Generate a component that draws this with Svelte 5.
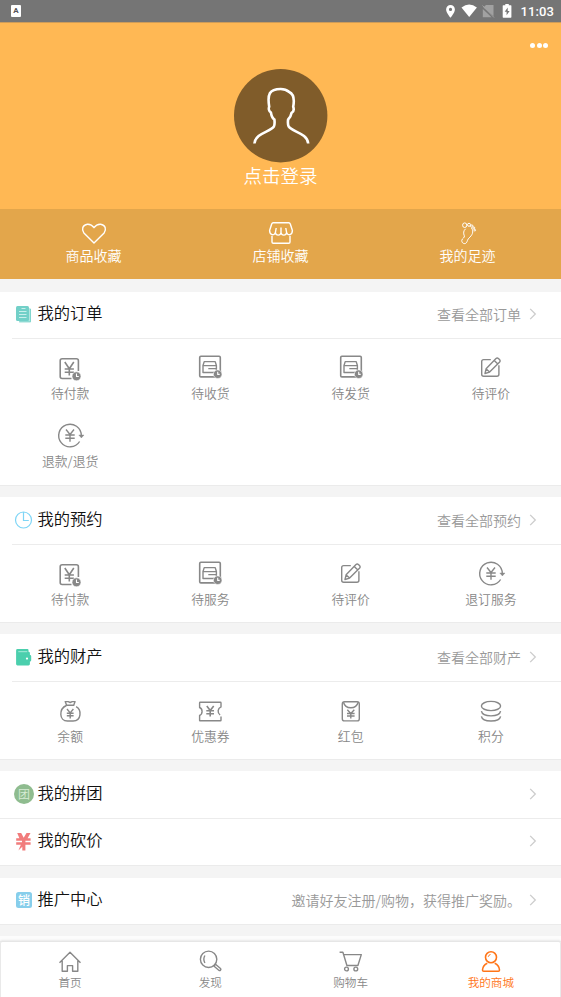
<script lang="ts">
	type Item = { icon: string; label: string };

	const shortcuts: Item[] = [
		{ icon: 'heart', label: '商品收藏' },
		{ icon: 'shop', label: '店铺收藏' },
		{ icon: 'foot', label: '我的足迹' }
	];

	const sections: { icon: string; title: string; more: string; items: Item[] }[] = [
		{
			icon: 'orders',
			title: '我的订单',
			more: '查看全部订单',
			items: [
				{ icon: 'pay', label: '待付款' },
				{ icon: 'box', label: '待收货' },
				{ icon: 'box', label: '待发货' },
				{ icon: 'edit', label: '待评价' },
				{ icon: 'refund', label: '退款/退货' }
			]
		},
		{
			icon: 'clock',
			title: '我的预约',
			more: '查看全部预约',
			items: [
				{ icon: 'pay', label: '待付款' },
				{ icon: 'box', label: '待服务' },
				{ icon: 'edit', label: '待评价' },
				{ icon: 'refund', label: '退订服务' }
			]
		},
		{
			icon: 'wallet',
			title: '我的财产',
			more: '查看全部财产',
			items: [
				{ icon: 'bag', label: '余额' },
				{ icon: 'coupon', label: '优惠券' },
				{ icon: 'packet', label: '红包' },
				{ icon: 'coins', label: '积分' }
			]
		}
	];

	const tabs: Item[] = [
		{ icon: 'home', label: '首页' },
		{ icon: 'search', label: '发现' },
		{ icon: 'cart', label: '购物车' },
		{ icon: 'user', label: '我的商城' }
	];

	let active = $state('user');
</script>

{#snippet icon(name: string)}
	<svg class="icon" viewBox="0 0 28 28">
		{#if name === 'heart'}
			<path d="M14 24 3.900 14C1.400 10.800 2.400 5.700 7.400 5.200c3-.2 5 1.200 6.600 3.500 1.600-2.300 3.600-3.700 6.600-3.500 5 .5 6 5.600 3.500 8.800z" />
		{:else if name === 'shop'}
			<path d="M6.200 3.800h15.600q1 0 1.500 1.200l2.100 6.500c0 5-5.200 5.200-5.800 2 -.6 3.500-5 3.500-5.600 0-.6 3.500-5 3.500-5.600 0-.6 3.200-5.800 3-5.800-2l2.100-6.500q.5-1.200 1.500-1.200zM8.400 13.500l.8-4.500M14 13.500V8.500M19.600 13.500l-.8-4.500M5 16.800v6.200q0 1.300 1.300 1.300h15.400q1.300 0 1.300-1.300v-6.200" />
		{:else if name === 'foot'}
			<path class="thin" d="M11.600 9.800c-2.300 2-2.300 4.400-1.300 7 .8 2-2.100 2.200-2.500 4.500-.3 3 3 4.300 4.500 2.500 1.500-1.700.5-3 3.600-5.700 3.500-3.200 3.600-7.200 1.300-9.100" />
			<ellipse class="thin" cx="10.700" cy="6.200" rx="2.100" ry="2.300" />
			<circle class="thin" cx="15" cy="5.800" r="1.500" />
			<circle class="thin" cx="17.800" cy="7.100" r="1.200" />
			<circle class="thin" cx="19.800" cy="9" r="1" />
			<circle class="thin" cx="20.800" cy="11.200" r=".8" />
		{:else if name === 'pay'}
			<path class="bold" d="M15.500 24.500H6.200q-2 0-2-2V6.800q0-2 2-2h14.200q2 0 2 2v10.200" />
			<path class="bold" d="m8.800 8 4.500 6.800L17.800 8M13.300 14.800v6.700M8.700 15h9.200M8.700 18.200h9.200" />
			<circle class="solid" cx="20.500" cy="22.300" r="4.500" />
			<path class="hole" d="M20.500 19.600v2.900h2.300" />
		{:else if name === 'box'}
			<rect class="bold" x="3.700" y="2.300" width="20.600" height="20.600" rx="1.200" />
			<path d="M7 18.500v-7l1.200-3.900h11l1.200 3.900v7zM7 11.600h13.400M12.300 14.600h8" />
			<circle class="solid" cx="21.700" cy="20.200" r="4.300" />
			<path class="hole" d="M21.700 17.700v2.700h2" />
		{:else if name === 'edit'}
			<path d="M13.800 5.600H6.700q-2 0-2 2v12.700q0 2 2 2h13.200q2 0 2-2v-9" />
			<path d="m8 19.500 1.100-4.700 9.900-10.300q1.200-1.100 2.400 0l1.300 1.300q1 1.200 0 2.200l-10.100 10.100zM17.200 6.500l3.700 3.600M9.200 14.900l3.400 3.200" />
		{:else if name === 'refund'}
			<path d="M25.300 13.500A11.300 11.300 0 1 0 23.600 19.500" />
			<path d="M22.800 13h5.200l-2.600 2.900z" fill="currentColor" stroke-width=".4" />
			<path d="m10 7.500 4 5 4-5M14 12.500v7.200M9.300 13h9.400M9.300 16.300h9.400" />
		{:else if name === 'bag'}
			<path d="M10.600 8.300 9.200 4.600h3l2 .9 2-.9h2.900l-1.400 3.700M10 8.300h8.300M10.400 8.500C2.800 11.800 2.800 24 11.500 24h5.600c8.700 0 8.600-11.500 3-14.300" />
			<path d="m11 12 3.200 3.900 3.200-3.900M14.200 16v5.600M10.800 16.200h6.800M10.800 18.800h6.800" />
		{:else if name === 'coupon'}
			<path d="M4.200 5.300h20.200q.6 0 .6.600v4c-3.400 1.500-3.900 5.900-.9 8.100M25 19.500v3.700q0 .6-.6.600H4.200q-.6 0-.6-.6v-4.700c3.300-1.500 3.300-6.500 0-8V5.900q0-.6.600-.6" />
			<path class="bold" d="m10.800 9 3.400 4.600L17.700 9M14.200 13.600v6M10.300 13.800H18M10.300 16.800H18" />
		{:else if name === 'packet'}
			<rect x="5.300" y="4.700" width="17" height="19.200" rx="2.200" />
			<path d="M6.600 5.500c1.700 7 12.700 7 14.400 0M10.300 12.800l3.500 3.700 3.500-3.700M13.800 16.500v5M10 16.500h7.600M10 19h7.600" />
		{:else if name === 'coins'}
			<ellipse cx="14" cy="9" rx="9.600" ry="4.600" />
			<path d="M4.400 14.200c1.200 6.200 18 6.200 19.200 0M4.400 19.300c1.200 6.200 18 6.200 19.200 0" />
		{:else if name === 'home'}
			<path d="M3.500 14.800 14 4.200l10.500 10.600M6.200 12.800v10.500h5.200V17.600h5.200v5.700h5.200V12.800" />
		{:else if name === 'search'}
			<circle cx="12.600" cy="11.300" r="8.200" />
			<path d="M8.900 7.500q-2.200 3.700 0 7.500M17.800 18l1.700-1.700 5 4.200q.8.900 0 1.700t-1.700 0z" />
		{:else if name === 'cart'}
			<path d="M2.600 4.200h3.300l4 13.300h11l3.400-10.900H6.700" />
			<circle cx="9.500" cy="21" r="1.900" />
			<circle cx="18.800" cy="21" r="1.900" />
		{:else if name === 'user'}
			<circle class="bold" cx="14" cy="9.300" r="5.500" />
			<path class="bold" d="M10.300 15.300C7 16.800 5.700 19 5.500 22q0 1.300 1.200 1.300h14.600q1.200 0 1.200-1.300c-.2-3-1.500-5.200-4.800-6.700" />
			<path class="thin" d="M11.200 8.800q.5-2 2.300-2.300" />
		{/if}
	</svg>
{/snippet}

{#snippet badge(name: string)}
	<svg class="badge" viewBox="0 0 20 20">
		{#if name === 'orders'}
			<path d="M5 4.200h11q.9 0 .9.900v12.300q0 .9-.9.900H5.500z" fill="#b2e6e1" />
			<rect x="2" y="2" width="13" height="15" rx="1.500" fill="#72d0c8" />
			<path d="M7.500 4.500h4M5 7.500h7.500M5 10.500h7.500M5 13.500h7.500" stroke="#c9efec" />
			<path d="M16.500 5v12.800H5" fill="none" stroke="#72d0c8" stroke-width=".8" />
		{:else if name === 'clock'}
			<circle cx="9.500" cy="10" r="8" fill="none" stroke="#7ed5f6" stroke-width="1.200" />
			<path d="M9.500 2v8.500h5.300" fill="none" stroke="#7ed5f6" stroke-width="1.200" />
		{:else if name === 'wallet'}
			<path d="M3.500 2h10q1 0 1 1.200v1.600q1.400 0 1.400 1.300v2h.1q1.200 0 1.200 1.200v4q0 1.200-1.200 1.200h-.1V17q0 1.400-1.400 1.400H3.500Q2.100 18.400 2.100 17V3.400Q2.100 2 3.500 2z" fill="#4bcfad" />
			<path d="M4.300 4.700h9" stroke="#a9eadb" />
			<circle cx="13" cy="11.600" r="1.100" fill="#fff" />
		{:else if name === 'bargain'}
			<path d="M3.200 2h4l2.500 4.700L12.500 2h4l-2.900 5.200h3v2.600h-5.200v1.400h5.200v2.600h-5.200v5.700H8.300v-3.700l-3.900 3.600 2.400-5.600H2.200v-2.600H8v-1.400H2.200V7.200h3.200z" fill="#f17c7c" />
		{/if}
	</svg>
{/snippet}

{#snippet chevron()}
	<svg class="chevron" viewBox="0 0 8 12"><path d="m1.200.9 5.100 5.100-5.100 5.100" /></svg>
{/snippet}

<div class="page">
	<div class="statusbar">
		<span class="ime">A</span>
		<svg class="signals" viewBox="0 0 72 22">
			<path fill="#fff" fill-rule="evenodd" d="M8.500 5a4.400 4.400 0 0 0-4.400 4.400c0 3.200 4.400 8.300 4.400 8.300s4.400-5.100 4.400-8.300A4.400 4.400 0 0 0 8.500 5zm0 2.800a1.600 1.600 0 1 1 0 3.200 1.600 1.600 0 0 1 0-3.200z" />
			<path fill="#fff" d="M19.500 7.400q7.700-5.600 15.400 0L27.200 17z" />
			<path fill="#a1a1a1" d="M44 5h7.500v11L41.400 7.500zM40.800 9l8.700 8.200h-8.700z" />
			<path stroke="#a1a1a1" d="m40.500 5.500 11.500 12" />
			<path fill="#fff" d="M61.300 5.200h2v-1.200h3.500v1.200h2q.6 0 .6.600v11.300q0 .6-.6.600h-7.500q-.6 0-.6-.6V5.800q0-.6.600-.6z" />
			<path fill="#757575" d="m65.700 7.500-3 4.200h1.900v3.500l3-4.300h-1.900z" />
		</svg>
		<span class="time">11:03</span>
	</div>

	<header class="hero">
		<div class="dots"><i></i><i></i><i></i></div>
		<svg class="avatar" viewBox="0 0 94 94">
			<circle cx="46.700" cy="46.700" r="46.700" />
			<path d="M20.400 74.500c1-10.500 16-11.500 19.500-17 1-2 .8-4.500.5-7-2.600-1.700-3-4.200-3.500-7-2.200-1.400-2.400-4.200-1.700-5.800C33.200 25.500 35.200 20 46.700 20c4.500 0 6.500 1.300 8.500 3 5.500 2.500 5.200 8.500 4 14.800.9 2.500.2 5-1.600 6-.5 2.800-1.700 5-3.500 6.700-.3 2.500-.5 5 .6 7 3.500 5.500 18.500 6.500 19.500 17" />
		</svg>
		<span class="login">点击登录</span>
	</header>

	<div class="shortcuts">
		{#each shortcuts as item}
			<div class="shortcut">
				{@render icon(item.icon)}
				<span>{item.label}</span>
			</div>
		{/each}
	</div>

	{#each sections as section}
		<section class="card">
			<div class="head">
				{@render badge(section.icon)}
				<h2>{section.title}</h2>
				<span class="more">{section.more}</span>
				{@render chevron()}
			</div>
			<div class="grid">
				{#each section.items as item}
					<div class="cell">
						{@render icon(item.icon)}
						<span>{item.label}</span>
					</div>
				{/each}
			</div>
		</section>
	{/each}

	<section class="card rows">
		<div class="row first">
			<span class="badge group">团</span>
			<h2>我的拼团</h2>
			{@render chevron()}
		</div>
		<div class="row">
			{@render badge('bargain')}
			<h2>我的砍价</h2>
			{@render chevron()}
		</div>
	</section>

	<section class="card promo">
		<div class="row">
			<span class="badge sales"><b>销</b></span>
			<h2>推广中心</h2>
			<span class="more">邀请好友注册/购物，获得推广奖励。</span>
			{@render chevron()}
		</div>
	</section>

	<div class="rest"></div>

	<nav class="tabbar">
		{#each tabs as tab}
			<button class="tab" class:active={active === tab.icon} onclick={() => (active = tab.icon)}>
				{@render icon(tab.icon)}
				<span>{tab.label}</span>
			</button>
		{/each}
	</nav>
</div>

<style>
	.page {
		display: flex;
		flex-direction: column;
		height: 997px;
		overflow: hidden;
		background: #f4f4f4;
		font-family: 'Noto Sans CJK SC', sans-serif;
		font-weight: 350;
		color: #111;
	}

	.statusbar {
		flex: none;
		display: flex;
		align-items: center;
		height: 22px;
		padding: 0 7px 0 11px;
		background: #757575;
		border-bottom: 1px solid #cf9c58;
		box-sizing: border-box;
		height: 23px;
		color: #fff;
	}

	.ime {
		width: 10px;
		height: 12px;
		border-radius: 1px;
		background: #fff;
		color: #555;
		font: bold 8px/12px Roboto, sans-serif;
		text-align: center;
	}

	.signals {
		width: 72px;
		height: 22px;
		margin-left: auto;
		margin-right: 7px;
	}

	.time {
		font: 500 13px/22px Roboto, sans-serif;
		letter-spacing: 0.1px;
		padding-top: 1px;
	}

	.hero {
		flex: none;
		display: flex;
		flex-direction: column;
		align-items: center;
		height: 186px;
		background: #ffb854;
	}

	.dots {
		align-self: flex-end;
		display: flex;
		gap: 1.5px;
		padding: 20px 13px 21px 0;
	}

	.dots i {
		width: 5px;
		height: 5px;
		border-radius: 50%;
		background: #fff;
	}

	.avatar {
		width: 94px;
		height: 94px;
	}

	.avatar circle {
		fill: #805c2a;
	}

	.avatar path {
		fill: none;
		stroke: #fff;
		stroke-width: 2.6;
	}

	.login {
		color: #fff;
		font-size: 18.5px;
		line-height: 25px;
	}

	.shortcuts {
		flex: none;
		display: grid;
		grid-template-columns: repeat(3, 1fr);
		height: 70px;
		margin-bottom: 13px;
		background: #e3a64b;
		color: #fff;
	}

	.shortcut {
		display: flex;
		flex-direction: column;
		align-items: center;
		padding-top: 10px;
		font-size: 14px;
		line-height: 16px;
	}

	.icon {
		display: block;
		width: 28px;
		height: 28px;
		fill: none;
		stroke: currentColor;
		stroke-width: 1.4;
		stroke-linejoin: round;
		overflow: visible;
	}

	.icon .bold {
		stroke-width: 1.6;
	}

	.icon .thin {
		stroke-width: 1;
	}

	.icon .solid {
		fill: currentColor;
		stroke: #fff;
		stroke-width: 0.6;
	}

	.icon .hole {
		stroke: #fff;
		stroke-width: 1.1;
	}

	.card {
		flex: none;
		margin-bottom: 11px;
		background: #fff;
		border-bottom: 1px solid #ebebeb;
	}

	.head,
	.row {
		display: flex;
		align-items: center;
		box-sizing: border-box;
		height: 48px;
		padding: 0 24px 2px 2px;
		margin-left: 12px;
	}

	.head {
		border-bottom: 1px solid #ececec;
	}

	.card:nth-of-type(1) .head {
		height: 47px;
	}

	.badge {
		flex: none;
		width: 20px;
		height: 20px;
	}

	h2 {
		margin: 0 auto 0 3.5px;
		padding-bottom: 4px;
		font-size: 16.3px;
		font-weight: inherit;
		line-height: 24px;
	}

	.more {
		color: #999;
		font-size: 14px;
		line-height: 20px;
	}

	.chevron {
		width: 8px;
		height: 12px;
		margin-left: 8px;
		fill: none;
		stroke: #ccc;
		stroke-width: 1.3;
	}

	.grid {
		display: grid;
		grid-template-columns: repeat(4, 1fr);
		row-gap: 20px;
		padding: 15px 0 14px;
	}

	.card:nth-of-type(1) .grid {
		padding-bottom: 15px;
	}

	.cell {
		display: flex;
		flex-direction: column;
		align-items: center;
		gap: 2px;
		color: #888;
		font-size: 12.8px;
		line-height: 18px;
	}

	.rows {
		margin-bottom: 12px;
	}

	.row {
		height: 46px;
		margin-left: 0;
		padding-left: 14px;
	}

	.row.first {
		height: 48px;
		border-bottom: 1px solid #ececec;
	}

	.group {
		border-radius: 50%;
		background: #8fbc8f;
		color: #d8ecd5;
		font-size: 12px;
		line-height: 19px;
		text-align: center;
	}

	.sales {
		display: flex;
		align-items: center;
		justify-content: center;
	}

	.sales b {
		width: 16px;
		height: 16px;
		border-radius: 2.5px;
		background: #87ceeb;
		color: #fff;
		font-size: 12px;
		font-weight: 500;
		line-height: 16px;
		text-align: center;
	}

	.rest {
		flex: none;
		height: 5px;
		background: #fcfcfc;
	}

	.tabbar {
		flex: 1;
		display: grid;
		grid-template-columns: repeat(4, 1fr);
		border-top: 1px solid #e6e6e6;
		border-radius: 2px 2px 0 0;
		background: #fff;
		box-shadow:
			inset 1px 0 #e9e9e9,
			inset -1px 0 #e9e9e9,
			0 -1px 2px rgba(0, 0, 0, 0.08);
	}

	.tab {
		display: flex;
		flex-direction: column;
		align-items: center;
		padding: 6px 0 0;
		border: 0;
		background: none;
		color: #888;
		font-family: inherit;
		font-size: 11.6px;
		font-weight: inherit;
		line-height: 12px;
	}

	.tab.active {
		color: #ff7518;
	}
</style>
